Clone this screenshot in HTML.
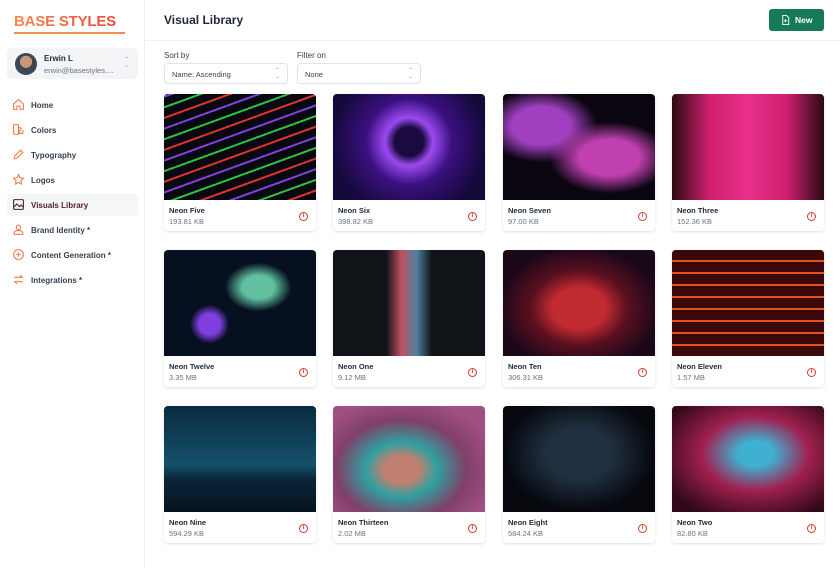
<!DOCTYPE html>
<html><head><meta charset="utf-8"><style>
*{box-sizing:border-box;margin:0;padding:0}
body{width:840px;height:568px;background:#fff;font-family:"Liberation Sans",sans-serif;color:#1f2937;position:relative;overflow:hidden}
.side{position:absolute;left:0;top:0;width:145px;height:568px;border-right:1px solid #eceef1;background:#fff}
.logo{position:absolute;left:14px;top:13px;font-size:15px;font-weight:900;letter-spacing:-0.2px;background:linear-gradient(90deg,#f7894d,#e8463f);-webkit-background-clip:text;color:transparent;white-space:nowrap}
.logoline{position:absolute;left:14px;top:32px;width:111px;height:2px;background:#f5894e}
.user{position:absolute;left:7px;top:48px;width:131px;height:31px;background:#f3f4f6;border-radius:5px}
.av{position:absolute;left:8px;top:5px;width:22px;height:22px;border-radius:50%;background:radial-gradient(circle at 50% 40%,#c9967a 0 35%,#3b4656 36%)}
.un{position:absolute;left:37px;top:6px;font-size:8px;font-weight:bold}
.ue{position:absolute;left:37px;top:18px;font-size:7.5px;color:#6b7280}
.nav{position:absolute;left:7px;width:131px;height:22px;border-radius:4px;font-size:8px;font-weight:bold;color:#374151}
.nav span{position:absolute;left:24px;top:7px}
.nav svg{position:absolute;left:5px;top:4px}
.nav.act{background:#f5f6f8;color:#4a1f2a}
.main{position:absolute;left:146px;top:0;right:0}
.hdr{height:41px;border-bottom:1px solid #eef0f2}
.ttl{position:absolute;left:18px;top:13px;font-size:12px;font-weight:bold;color:#1f2937}
.new{position:absolute;right:16px;top:9px;width:55px;height:22px;background:#167a56;border-radius:3px;color:#fff;font-size:8.5px;font-weight:bold}
.new span{position:absolute;left:26px;top:6px}
.lbl{position:absolute;top:51px;font-size:8px;color:#374151}
.sel{position:absolute;top:63px;width:124px;height:21px;border:1px solid #dfe2e6;border-radius:4px;font-size:7.5px;color:#374151}
.sel span{position:absolute;left:7px;top:6px}
.sel i{position:absolute;right:7px;top:4px;font-style:normal;font-size:6px;line-height:6px;color:#9ca3af}
.card{position:absolute;width:152px;height:137px;border-radius:4px;box-shadow:0 1px 3px rgba(0,0,0,.12);background:#fff;overflow:hidden}
.img{height:106px}
.cn{position:absolute;left:5px;top:112px;font-size:7.5px;font-weight:bold;color:#1f2937}
.cs{position:absolute;left:5px;top:123px;font-size:7.5px;color:#6b7280}
.info{position:absolute;right:8px;top:118px;width:9px;height:9px;border:1px solid #d03a2c;border-radius:50%;color:#d03a2c;font-size:6px;text-align:center;line-height:7px;font-weight:bold}
</style></head><body>
<div class="side">
<div class="logo">BASE STYLES</div><div class="logoline"></div>
<div class="user"><div class="av"></div><div class="un">Erwin L</div><div class="ue">erwin@basestyles....</div><div style="position:absolute;right:9px;top:9px;font-size:6px;line-height:6px;color:#9ca3af">⌃<br>⌄</div></div>
<div class="nav" style="top:94px"><svg width="13" height="13" viewBox="0 0 24 24" fill="none" stroke="#f07a4a" stroke-width="2"><path d="M3 11l9-8 9 8v10h-6v-6h-6v6H3z"/></svg><span>Home</span></div>
<div class="nav" style="top:119px"><svg width="13" height="13" viewBox="0 0 24 24" fill="none" stroke="#f07a4a" stroke-width="2"><rect x="3" y="3" width="9" height="18" rx="2"/><path d="M12 7l5 3-5 9M12 19h8V13"/></svg><span>Colors</span></div>
<div class="nav" style="top:144px"><svg width="13" height="13" viewBox="0 0 24 24" fill="none" stroke="#f07a4a" stroke-width="2"><path d="M4 20l1-5L16 4l4 4L9 19z"/></svg><span>Typography</span></div>
<div class="nav" style="top:169px"><svg width="13" height="13" viewBox="0 0 24 24" fill="none" stroke="#f07a4a" stroke-width="2"><path d="M12 3l2.8 5.8 6.2.9-4.5 4.4 1 6.2L12 17.4 6.5 20.3l1-6.2L3 9.7l6.2-.9z"/></svg><span>Logos</span></div>
<div class="nav act" style="top:194px"><svg width="13" height="13" viewBox="0 0 24 24" fill="none" stroke="#4a1f2a" stroke-width="2"><rect x="3" y="3" width="18" height="18" rx="2"/><path d="M3 17l6-6 5 5 3-3 4 4"/></svg><span>Visuals Library</span></div>
<div class="nav" style="top:219px"><svg width="13" height="13" viewBox="0 0 24 24" fill="none" stroke="#f07a4a" stroke-width="2"><circle cx="12" cy="8" r="4"/><path d="M4 21v-2a5 5 0 015-5h6a5 5 0 015 5v2z"/></svg><span>Brand Identity *</span></div>
<div class="nav" style="top:244px"><svg width="13" height="13" viewBox="0 0 24 24" fill="none" stroke="#f07a4a" stroke-width="2"><circle cx="12" cy="12" r="9"/><path d="M12 8v8M8 12h8"/></svg><span>Content Generation *</span></div>
<div class="nav" style="top:269px"><svg width="13" height="13" viewBox="0 0 24 24" fill="none" stroke="#f07a4a" stroke-width="2"><path d="M4 8h15l-4-4M20 16H5l4 4"/></svg><span>Integrations *</span></div>
</div>
<div class="main">
<div class="hdr"></div>
<div class="ttl">Visual Library</div>
<div class="new"><svg style="position:absolute;left:11px;top:5px" width="11" height="12" viewBox="0 0 24 24" fill="none" stroke="#fff" stroke-width="2"><path d="M6 2h8l5 5v15H6z"/><path d="M12 10v7M8.5 13.5h7"/></svg><span>New</span></div>
<div class="lbl" style="left:18px">Sort by</div>
<div class="lbl" style="left:151px">Filter on</div>
<div class="sel" style="left:18px"><span>Name: Ascending</span><i>⌃<br>⌄</i></div>
<div class="sel" style="left:151px"><span>None</span><i>⌃<br>⌄</i></div>
</div>
<div class="card" style="left:164px;top:94px"><div class="img" style="background:repeating-linear-gradient(-20deg,#080810 0 8px,#e03030 8px 10px,#080810 10px 18px,#30c040 18px 20px,#080810 20px 28px,#8040e0 28px 30px),#000"></div><div class="cn">Neon Five</div><div class="cs">193.81 KB</div><div class="info">i</div></div>
<div class="card" style="left:333px;top:94px"><div class="img" style="background:radial-gradient(circle at 50% 45%,#1a0a40 0 15%,#9b4af0 25%,#3a1080 45%,#15093a 80%)"></div><div class="cn">Neon Six</div><div class="cs">398.82 KB</div><div class="info">i</div></div>
<div class="card" style="left:503px;top:94px"><div class="img" style="background:radial-gradient(ellipse at 70% 60%,#c040b0 0 20%,transparent 40%),radial-gradient(ellipse at 25% 30%,#a040c0 0 18%,transparent 35%),#0a0510"></div><div class="cn">Neon Seven</div><div class="cs">97.00 KB</div><div class="info">i</div></div>
<div class="card" style="left:672px;top:94px"><div class="img" style="background:linear-gradient(90deg,#2a0a12,#d0206e 25%,#e8308a 50%,#d0206e 75%,#2a0a12)"></div><div class="cn">Neon Three</div><div class="cs">152.36 KB</div><div class="info">i</div></div>
<div class="card" style="left:164px;top:250px"><div class="img" style="background:radial-gradient(ellipse at 62% 35%,#60c0a0 0 12%,transparent 25%),radial-gradient(circle at 30% 70%,#8040e0 0 8%,transparent 15%),#061020"></div><div class="cn">Neon Twelve</div><div class="cs">3.35 MB</div><div class="info">i</div></div>
<div class="card" style="left:333px;top:250px"><div class="img" style="background:linear-gradient(90deg,#101418 0 35%,#c05060 45%,#5080a0 55%,#101418 65%)"></div><div class="cn">Neon One</div><div class="cs">9.12 MB</div><div class="info">i</div></div>
<div class="card" style="left:503px;top:250px"><div class="img" style="background:radial-gradient(ellipse at 50% 55%,#c02a30 0 25%,#5a1020 45%,#1a0818 75%)"></div><div class="cn">Neon Ten</div><div class="cs">306.31 KB</div><div class="info">i</div></div>
<div class="card" style="left:672px;top:250px"><div class="img" style="background:repeating-linear-gradient(180deg,#3a0808 0 10px,#e05020 10px 12px),#200404"></div><div class="cn">Neon Eleven</div><div class="cs">1.57 MB</div><div class="info">i</div></div>
<div class="card" style="left:164px;top:406px"><div class="img" style="background:linear-gradient(180deg,#0a2a40,#14506a 55%,#0a2438 70%,#06141e)"></div><div class="cn">Neon Nine</div><div class="cs">594.29 KB</div><div class="info">i</div></div>
<div class="card" style="left:333px;top:406px"><div class="img" style="background:radial-gradient(ellipse at 45% 60%,#c08070 0 15%,#30a0a0 30%,#80406a 55%,#a05080 80%)"></div><div class="cn">Neon Thirteen</div><div class="cs">2.02 MB</div><div class="info">i</div></div>
<div class="card" style="left:503px;top:406px"><div class="img" style="background:radial-gradient(ellipse at 50% 45%,#203040 0 30%,#06080e 70%)"></div><div class="cn">Neon Eight</div><div class="cs">584.24 KB</div><div class="info">i</div></div>
<div class="card" style="left:672px;top:406px"><div class="img" style="background:radial-gradient(ellipse at 55% 45%,#40b0d0 0 15%,#a02050 45%,#300818 85%)"></div><div class="cn">Neon Two</div><div class="cs">82.80 KB</div><div class="info">i</div></div>
</body></html>
